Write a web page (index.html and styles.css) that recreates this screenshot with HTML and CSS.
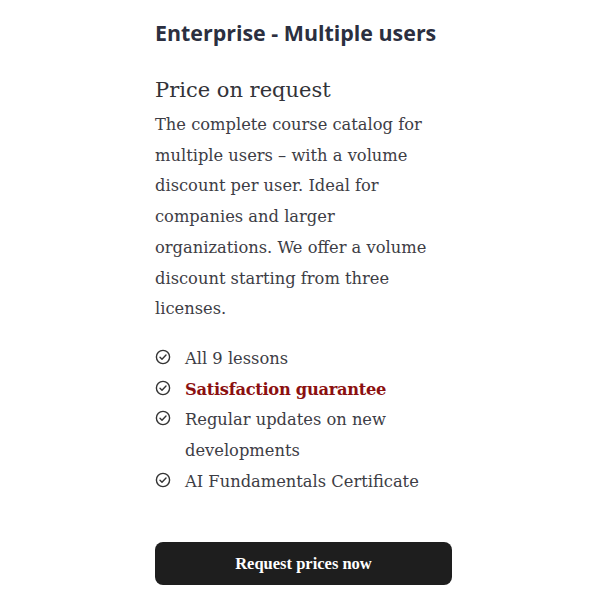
FILE: index.html
```html
<!DOCTYPE html>
<html lang="en">
<head>
<meta charset="utf-8">
<link rel="stylesheet" href="styles.css">
</head>
<body>
<div class="card">
  <h2 class="title">Enterprise - Multiple users</h2>
  <div class="price">Price on request</div>
  <p class="desc">The complete course catalog for multiple users – with a volume discount per user. Ideal for companies and larger organizations. We offer a volume discount starting from three licenses.</p>
  <ul class="features">
    <li><svg class="check" viewBox="0 0 16 16"><circle cx="8" cy="8" r="6.6"/><path d="M5 8.3l2 2 4-4.2"/></svg><span>All 9 lessons</span></li>
    <li><svg class="check" viewBox="0 0 16 16"><circle cx="8" cy="8" r="6.6"/><path d="M5 8.3l2 2 4-4.2"/></svg><span class="highlight">Satisfaction guarantee</span></li>
    <li><svg class="check" viewBox="0 0 16 16"><circle cx="8" cy="8" r="6.6"/><path d="M5 8.3l2 2 4-4.2"/></svg><span>Regular updates on new developments</span></li>
    <li><svg class="check" viewBox="0 0 16 16"><circle cx="8" cy="8" r="6.6"/><path d="M5 8.3l2 2 4-4.2"/></svg><span>AI Fundamentals Certificate</span></li>
  </ul>
  <button class="cta">Request prices now</button>
</div>
</body>
</html>
```
FILE: styles.css
```css
html, body {
  margin: 0;
  padding: 0;
  background: #ffffff;
}
.card {
  width: 297px;
  margin: 0 0 0 155px;
  padding-top: 18px;
  font-family: "DejaVu Serif", serif;
  color: #3d3d45;
}
.title {
  margin: 0;
  font-family: "Open Sans", sans-serif;
  font-weight: 700;
  font-size: 21.4px;
  line-height: 29px;
  color: #2b2f40;
}
.price {
  margin-top: 27px;
  font-size: 21px;
  line-height: 32px;
  color: #333338;
}
.desc {
  margin: 4px 0 0 0;
  font-size: 16.3px;
  line-height: 30.7px;
}
.features {
  list-style: none;
  margin: 19px 0 0 0;
  padding: 0;
}
.features li {
  display: flex;
  align-items: flex-start;
  gap: 14px;
  font-size: 16.3px;
  line-height: 30.7px;
}
.check {
  flex: none;
  width: 16px;
  height: 16px;
  margin-top: 5px;
  fill: none;
  stroke: #333;
  stroke-width: 1.4;
  stroke-linecap: round;
  stroke-linejoin: round;
}
.highlight {
  color: #8b1010;
  font-weight: 700;
  letter-spacing: -0.3px;
}
.cta {
  display: block;
  width: 297px;
  height: 43px;
  margin-top: 45px;
  border: none;
  border-radius: 8px;
  background: #1e1e1e;
  color: #ffffff;
  font-family: "Liberation Serif", serif;
  font-weight: 700;
  font-size: 16.5px;
}
```
